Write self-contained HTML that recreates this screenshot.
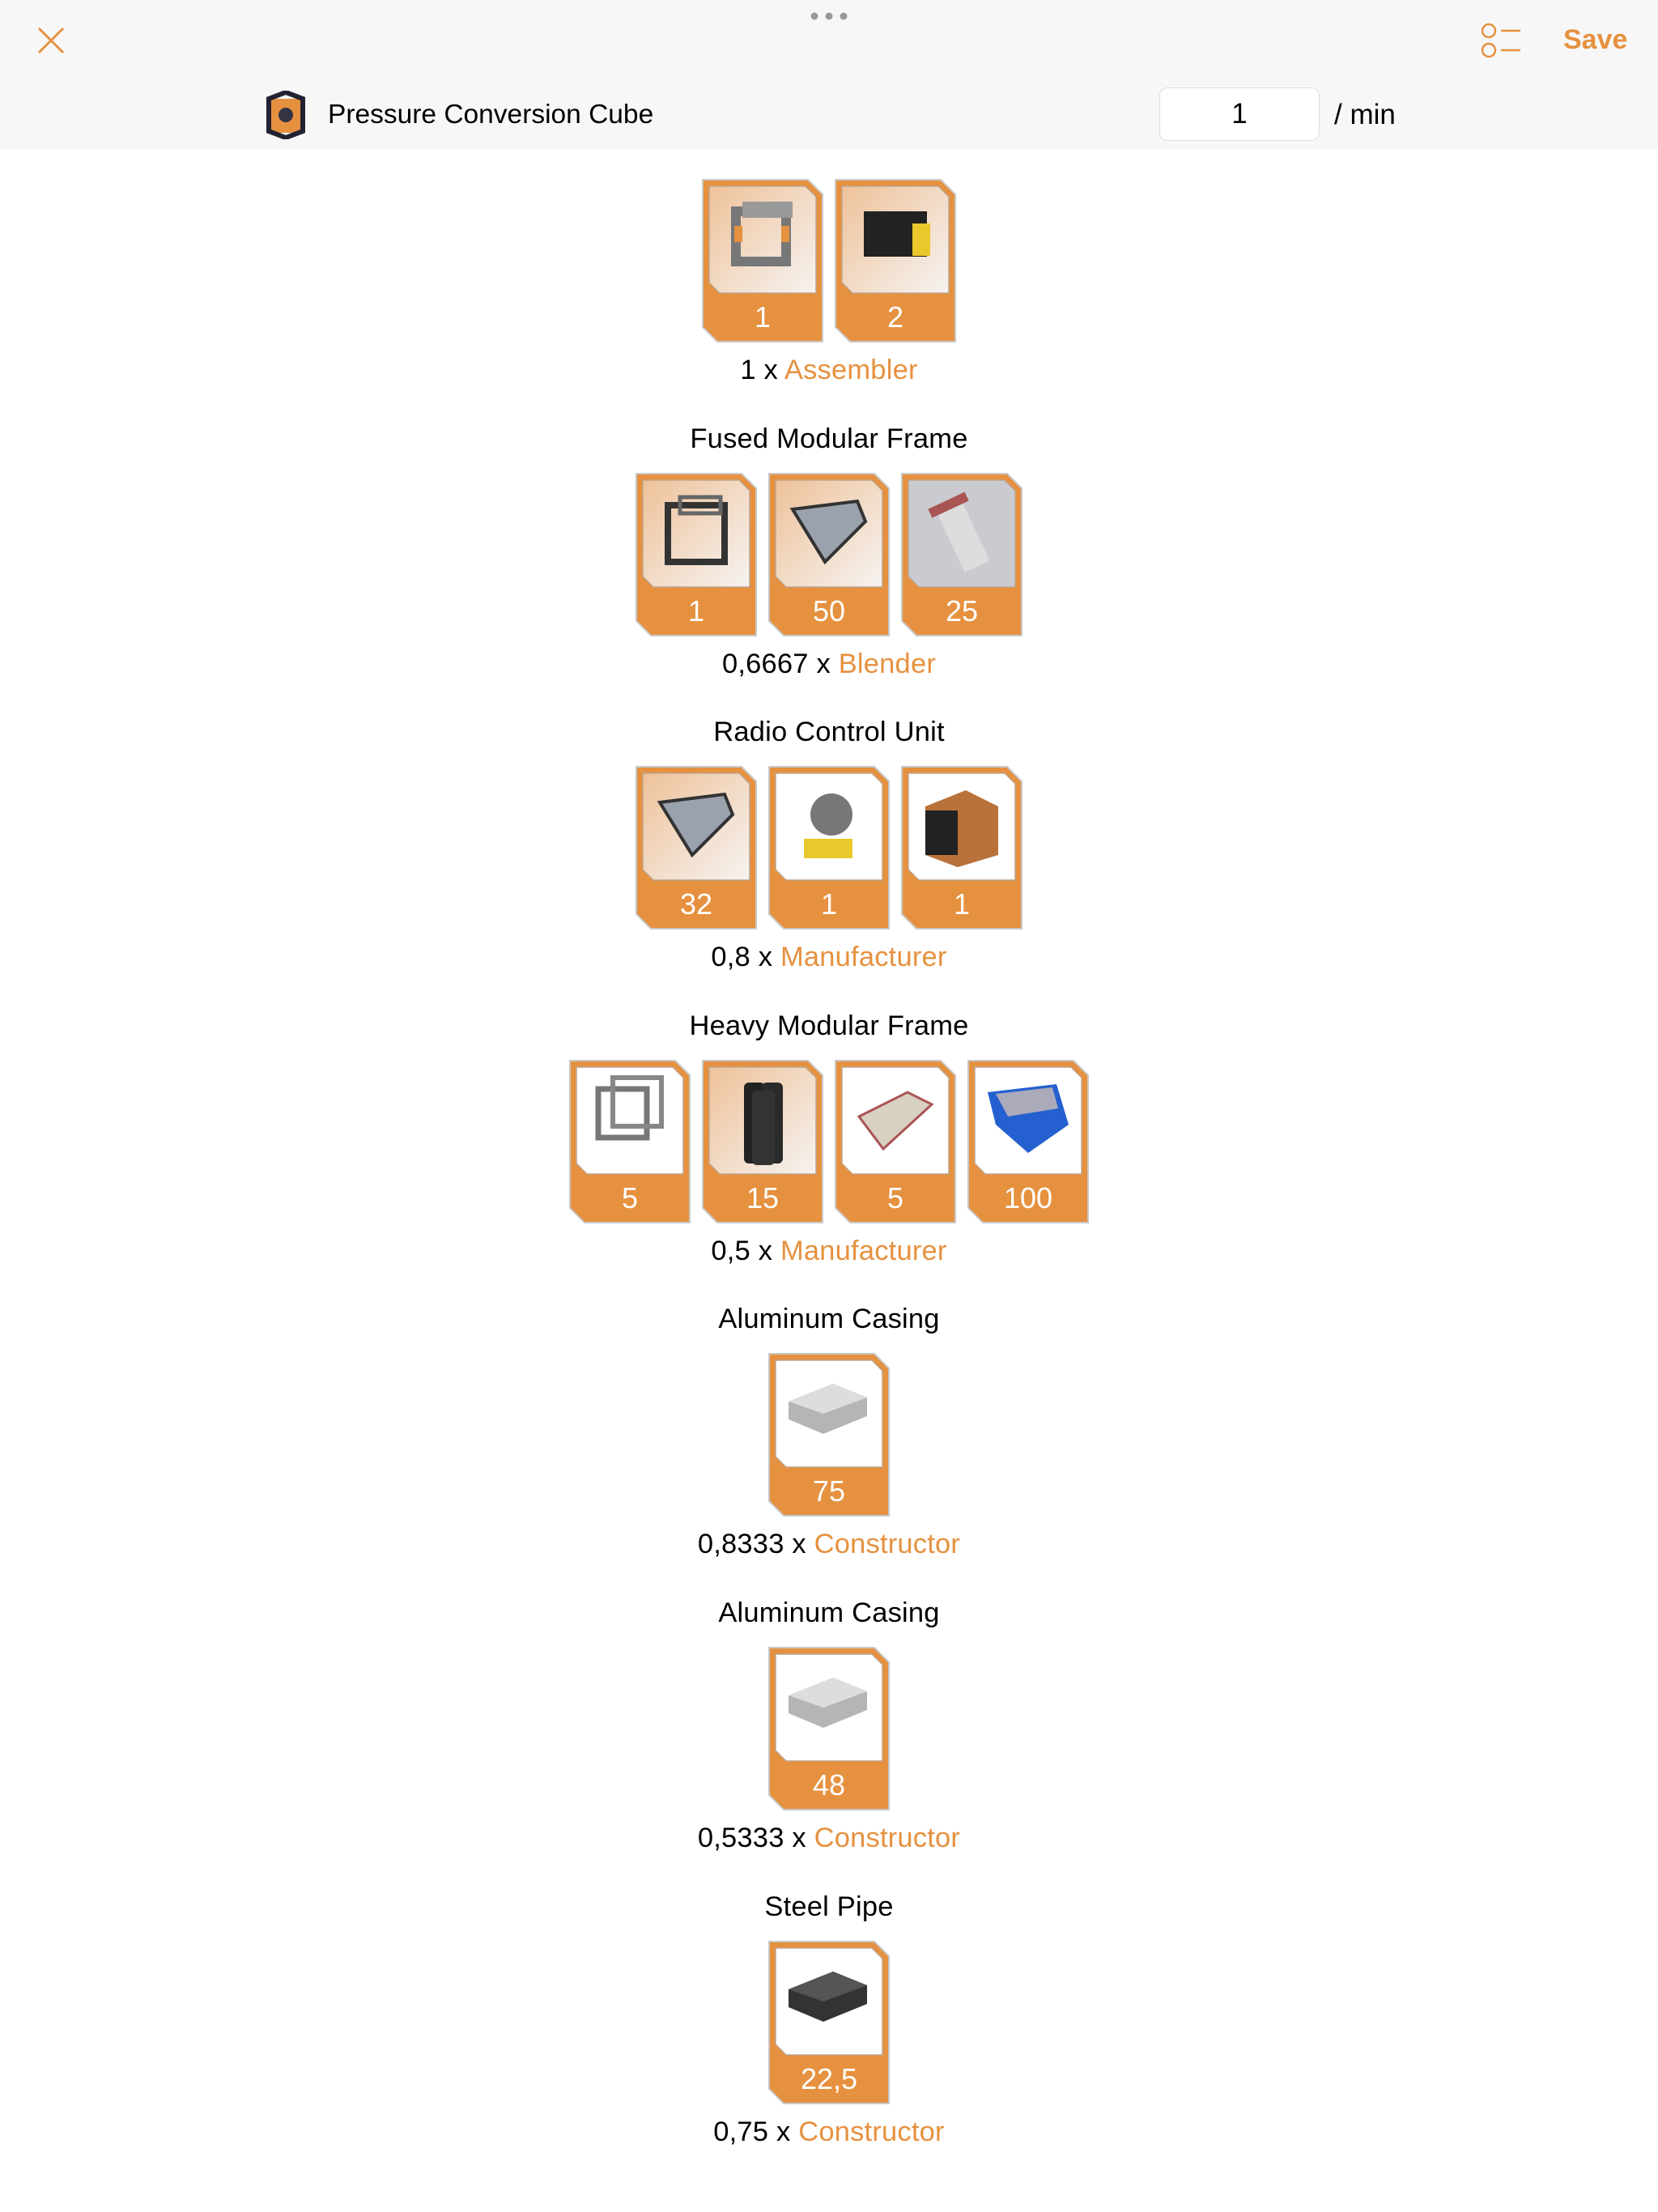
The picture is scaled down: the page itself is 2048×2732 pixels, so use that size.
<!DOCTYPE html>
<html><head><meta charset="utf-8"><style>
body{margin:0;width:2048px;height:2732px;background:#fff;position:relative;font-family:"Liberation Sans",sans-serif;overflow:hidden}
.hdr{position:absolute;left:0;top:0;width:2048px;height:184px;background:#f7f7f7}
.a{position:absolute}
.t{position:absolute;left:0;width:2048px;text-align:center;font-size:34.5px;color:#000;line-height:40px;letter-spacing:0.2px}
.o{color:#e6913f}
.card{position:absolute;width:150px;height:202px}
.num{position:absolute;left:0;top:149px;width:150px;text-align:center;color:#fff;font-size:36px;line-height:44px}
</style></head><body>
<div class="hdr"></div>
<svg class="a" style="left:46px;top:33px" width="34" height="34" viewBox="0 0 34 34"><path d="M2 2L32 32M32 2L2 32" stroke="#e6913f" stroke-width="3"/></svg>
<svg class="a" style="left:1000px;top:14px" width="48" height="12"><circle cx="6" cy="6" r="4.5" fill="#999"/><circle cx="24" cy="6" r="4.5" fill="#999"/><circle cx="42" cy="6" r="4.5" fill="#999"/></svg>
<svg class="a" style="left:1828px;top:28px" width="52" height="44"><circle cx="11" cy="10" r="8" fill="none" stroke="#e6913f" stroke-width="2.5"/><circle cx="11" cy="34" r="8" fill="none" stroke="#e6913f" stroke-width="2.5"/><path d="M26 10H50M26 34H50" stroke="#e6913f" stroke-width="2.5"/></svg>
<div class="a" style="left:1931px;top:30px;font-size:34px;font-weight:bold;color:#e6913f">Save</div>
<svg class="a" style="left:326px;top:112px" width="54" height="60" viewBox="0 0 54 60"><rect x="8" y="10" width="38" height="42" fill="#e6913f"/><path d="M6 10L27 2L48 10V50L27 58L6 50Z" fill="none" stroke="#223" stroke-width="6"/><circle cx="27" cy="30" r="9" fill="#334"/></svg>
<div class="a" style="left:405px;top:122px;font-size:33.5px;line-height:40px">Pressure Conversion Cube</div>
<div class="a" style="left:1432px;top:108px;width:198px;height:66px;background:#fff;border:1.5px solid #ddd;border-radius:10px;box-sizing:border-box;text-align:center;font-size:35px;line-height:64px">1</div>
<div class="a" style="left:1648px;top:122px;font-size:35px;line-height:40px">/ min</div>

<svg width="0" height="0" style="position:absolute"><defs>
<linearGradient id="g" x1="0" y1="0" x2="1" y2="1"><stop offset="0" stop-color="#eec29a"/><stop offset="1" stop-color="#f6f3f1"/></linearGradient>
</defs></svg>
<div id="root"></div>
<script>
var rows=[
 {title:null,items:[["1","g","cube"],["2","g","box"]],lab:["1 x ","Assembler"]},
 {title:"Fused Modular Frame",items:[["1","g","frame"],["50","g","plate"],["25","g2","pipe"]],lab:["0,6667 x ","Blender"]},
 {title:"Radio Control Unit",items:[["32","g","plate"],["1","w","dev"],["1","w","box2"]],lab:["0,8 x ","Manufacturer"]},
 {title:"Heavy Modular Frame",items:[["5","w","frame2"],["15","g","tubes"],["5","w","beam"],["100","w","bin"]],lab:["0,5 x ","Manufacturer"]},
 {title:"Aluminum Casing",items:[["75","w","ingot"]],lab:["0,8333 x ","Constructor"]},
 {title:"Aluminum Casing",items:[["48","w","ingot"]],lab:["0,5333 x ","Constructor"]},
 {title:"Steel Pipe",items:[["22,5","w","dark"]],lab:["0,75 x ","Constructor"]}
];
var icons={
cube:'<rect x="42" y="40" width="62" height="62" fill="none" stroke="#777" stroke-width="12"/><rect x="50" y="28" width="62" height="20" fill="#999"/><rect x="40" y="58" width="10" height="20" fill="#e6913f"/><rect x="98" y="58" width="10" height="20" fill="#e6913f"/>',
box:'<rect x="36" y="40" width="78" height="56" fill="#222"/><rect x="96" y="55" width="22" height="40" fill="#e8c82a"/>',
frame:'<rect x="40" y="40" width="70" height="70" fill="none" stroke="#333" stroke-width="8"/><rect x="55" y="30" width="50" height="20" fill="none" stroke="#666" stroke-width="5"/>',
plate:'<path d="M30 45L110 35L120 60L70 110Z" fill="#9aa2ae" stroke="#333" stroke-width="4"/>',
pipe:'<rect x="58" y="30" width="34" height="90" fill="#ddd" transform="rotate(-25 75 75)"/><rect x="50" y="30" width="50" height="12" fill="#a55" transform="rotate(-25 75 75)"/>',
dev:'<circle cx="78" cy="60" r="26" fill="#777"/><rect x="44" y="90" width="60" height="24" fill="#e8c82a"/>',
box2:'<path d="M30 50L80 30L120 50V110L70 125L30 110Z" fill="#b9723a"/><rect x="30" y="55" width="40" height="55" fill="#222"/>',
frame2:'<rect x="36" y="36" width="60" height="60" fill="none" stroke="#777" stroke-width="7"/><rect x="54" y="22" width="60" height="60" fill="none" stroke="#888" stroke-width="6"/>',
tubes:'<rect x="52" y="28" width="26" height="100" rx="6" fill="#222"/><rect x="74" y="28" width="26" height="100" rx="6" fill="#2a2a2a"/><rect x="62" y="38" width="28" height="92" rx="6" fill="#333"/>',
beam:'<path d="M30 70L90 40L120 55L60 110Z" fill="#d8d0c0" stroke="#a55" stroke-width="3"/>',
bin:'<path d="M25 40L110 30L125 80L75 115L35 80Z" fill="#2460d0"/><path d="M35 42L105 34L112 60L50 70Z" fill="#aab"/>',
ingot:'<path d="M25 60L80 38L122 55L122 78L68 100L25 82Z" fill="#b5b5b5"/><path d="M25 60L80 38L122 55L68 75Z" fill="#ddd"/>',
dark:'<path d="M25 60L80 38L122 55L122 78L68 100L25 82Z" fill="#333"/><path d="M25 60L80 38L122 55L68 75Z" fill="#555"/>'
};
var h='';
rows.forEach(function(r,i){
 var top=221+i*362.6;
 if(r.title) h+='<div class="t" style="top:'+(top-62)+'px">'+r.title+'</div>';
 var n=r.items.length, w=n*150+(n-1)*14, x0=1024-w/2;
 r.items.forEach(function(it,j){
  var fill=it[1]=='w'?'#fff':(it[1]=='g2'?'#c9cbd0':'url(#g)');
  h+='<div class="card" style="left:'+(x0+j*164)+'px;top:'+top+'px"><svg width="150" height="202" viewBox="0 0 150 202"><path d="M1 1H131L149 19V201H19L1 183Z" fill="#e6913f" stroke="#c8c8c8" stroke-width="2"/><path d="M9 9H128L141 22V141H22L9 128Z" fill="'+fill+'" stroke="#bfa48c" stroke-width="1.5"/>'+icons[it[2]]+'</svg><div class="num">'+it[0]+'</div></div>';
 });
 h+='<div class="t" style="top:'+(top+216)+'px">'+r.lab[0]+'<span class="o">'+r.lab[1]+'</span></div>';
});
document.getElementById('root').innerHTML=h;
</script>
</body></html>
